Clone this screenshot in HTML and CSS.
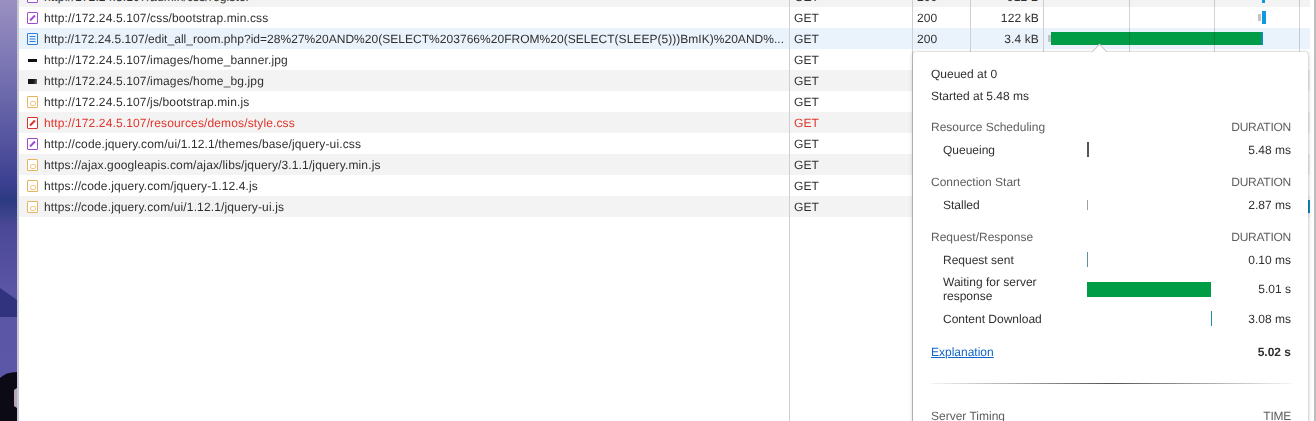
FILE: index.html
```html
<!DOCTYPE html>
<html lang="en">
<head>
  <meta charset="UTF-8">
  <meta name="viewport" content="width=device-width, initial-scale=1.0">
  <title>Network</title>
  <link rel="stylesheet" href="styles.css">
</head>
<body>
  <div class="page">
    <div class="desktop">
      <svg class="desktop-art" width="17" height="421" viewBox="0 0 17 421">
        <path d="M0 288 L17 300 L17 317 L0 317 Z" fill="#32337f"/>
        <path d="M0 378 Q6 372 17 372 L17 421 L0 421 Z" fill="#0c0a14"/>
        <path d="M14 390 L17 388 L17 408 L14 406 Z" fill="#b9a6b4"/>
      </svg>
    </div>

    <div class="panel">
      <div class="table">
        <div class="row row-grey">
          <div class="cell name"><span class="icon icon-css"></span>http://172.24.5.107/admin/css/register</div>
          <div class="cell">GET</div>
          <div class="cell">200</div>
          <div class="cell size">912 B</div>
          <div class="cell fall"><i class="bar bar-blue bar-top"></i></div>
        </div>
        <div class="row">
          <div class="cell name"><span class="icon icon-css"></span>http://172.24.5.107/css/bootstrap.min.css</div>
          <div class="cell">GET</div>
          <div class="cell">200</div>
          <div class="cell size">122 kB</div>
          <div class="cell fall"><i class="bar bar-wait bar-boot-wait"></i><i class="bar bar-blue bar-boot"></i></div>
        </div>
        <div class="row row-selected">
          <div class="cell name name-long"><span class="icon icon-doc"><svg width="11" height="12" viewBox="0 0 11 12"><path d="M2.500 3.500h6M2.500 6h6M2.500 8.500h6" stroke="#2f7fd6" fill="none"/></svg></span>http://172.24.5.107/edit_all_room.php?id=28%27%20AND%20(SELECT%203766%20FROM%20(SELECT(SLEEP(5)))BmIK)%20AND%...</div>
          <div class="cell">GET</div>
          <div class="cell">200</div>
          <div class="cell size">3.4 kB</div>
          <div class="cell fall"><i class="bar bar-wait bar-page-wait"></i><i class="bar bar-green bar-page"></i><i class="bar bar-teal bar-page-end"></i></div>
        </div>
        <div class="row">
          <div class="cell name"><span class="thumb thumb-banner"></span>http://172.24.5.107/images/home_banner.jpg</div>
          <div class="cell">GET</div>
          <div class="cell"></div>
          <div class="cell size"></div>
          <div class="cell fall"></div>
        </div>
        <div class="row row-grey">
          <div class="cell name"><span class="thumb thumb-bg"></span>http://172.24.5.107/images/home_bg.jpg</div>
          <div class="cell">GET</div>
          <div class="cell"></div>
          <div class="cell size"></div>
          <div class="cell fall"></div>
        </div>
        <div class="row">
          <div class="cell name"><span class="icon icon-js"></span>http://172.24.5.107/js/bootstrap.min.js</div>
          <div class="cell">GET</div>
          <div class="cell"></div>
          <div class="cell size"></div>
          <div class="cell fall"></div>
        </div>
        <div class="row row-grey row-failed">
          <div class="cell name"><span class="icon icon-failed"></span>http://172.24.5.107/resources/demos/style.css</div>
          <div class="cell">GET</div>
          <div class="cell"></div>
          <div class="cell size"></div>
          <div class="cell fall"></div>
        </div>
        <div class="row">
          <div class="cell name"><span class="icon icon-css"></span>http://code.jquery.com/ui/1.12.1/themes/base/jquery-ui.css</div>
          <div class="cell">GET</div>
          <div class="cell"></div>
          <div class="cell size"></div>
          <div class="cell fall"></div>
        </div>
        <div class="row row-grey">
          <div class="cell name"><span class="icon icon-js"></span>https://ajax.googleapis.com/ajax/libs/jquery/3.1.1/jquery.min.js</div>
          <div class="cell">GET</div>
          <div class="cell"></div>
          <div class="cell size"></div>
          <div class="cell fall"></div>
        </div>
        <div class="row">
          <div class="cell name"><span class="icon icon-js"></span>https://code.jquery.com/jquery-1.12.4.js</div>
          <div class="cell">GET</div>
          <div class="cell"></div>
          <div class="cell size"></div>
          <div class="cell fall"></div>
        </div>
        <div class="row row-grey">
          <div class="cell name"><span class="icon icon-js"></span>https://code.jquery.com/ui/1.12.1/jquery-ui.js</div>
          <div class="cell">GET</div>
          <div class="cell"></div>
          <div class="cell size"></div>
          <div class="cell fall"><i class="bar bar-teal bar-last"></i></div>
        </div>
        <div class="row row-rest">
          <div class="cell name"></div>
          <div class="cell"></div>
          <div class="cell"></div>
          <div class="cell size"></div>
          <div class="cell fall"></div>
        </div>
      </div>
      <div class="panel-edge"></div>

      <div class="popover">
        <span class="arrow"></span>
        <p class="queued">Queued at 0</p>
        <p class="started">Started at 5.48 ms</p>

        <div class="head head-first"><span>Resource Scheduling</span><span>DURATION</span></div>
        <div class="timing"><span class="timing-name">Queueing</span><span class="track"><i class="tick tick-queue"></i></span><span class="timing-value">5.48 ms</span></div>

        <div class="head"><span>Connection Start</span><span>DURATION</span></div>
        <div class="timing"><span class="timing-name">Stalled</span><span class="track"><i class="tick tick-stalled"></i></span><span class="timing-value">2.87 ms</span></div>

        <div class="head"><span>Request/Response</span><span>DURATION</span></div>
        <div class="timing"><span class="timing-name">Request sent</span><span class="track"><i class="tick tick-sent"></i></span><span class="timing-value">0.10 ms</span></div>
        <div class="timing timing-tall"><span class="timing-name">Waiting for server response</span><span class="track"><i class="tick tick-wait"></i></span><span class="timing-value">5.01 s</span></div>
        <div class="timing"><span class="timing-name">Content Download</span><span class="track"><i class="tick tick-down"></i></span><span class="timing-value">3.08 ms</span></div>

        <div class="total"><a href="#">Explanation</a><strong>5.02 s</strong></div>
        <div class="rule"></div>
        <div class="head head-server"><span>Server Timing</span><span>TIME</span></div>
      </div>
    </div>
  </div>
</body>
</html>
```

FILE: styles.css
```css
* {
  box-sizing: border-box;
}

html, body {
  margin: 0;
  height: 100%;
  overflow: hidden;
}

body {
  font-family: "Liberation Sans", Arial, sans-serif;
  font-size: 12px;
  color: #303030;
  background-color: #ffffff;
  text-rendering: geometricPrecision;
}

/* the screenshot is a little soft */
.page {
  display: flex;
  height: 421px;
  filter: blur(0.3px);
}

/* bit of desktop wallpaper left of the window */
.desktop {
  flex: 0 0 17px;
  background: linear-gradient(#9a90c0 0, #7d78b5 60px, #4f4f9c 150px, #3a3f8f 185px, #2b3a80 200px, #4a4896 225px, #5a55a5 290px, #5f58a8 421px);
}

.desktop-art {
  display: block;
}

.panel {
  flex: 1;
  display: flex;
  position: relative;
  min-width: 0;
  border-left: 2px solid #c9c9d6;
}

.table {
  flex: 1;
  display: flex;
  flex-direction: column;
  margin-top: -14px;
  min-width: 0;
}

.row {
  display: grid;
  grid-template-columns: 771px 123px 58px 73px 1fr;
  height: 21px;
  line-height: 21px;
  letter-spacing: 0.135px;
  flex: none;
}

.row-grey {
  background-color: #f3f3f3;
}

.row-selected {
  background-color: #eaf2fb;
}

.row-failed {
  color: #e0352b;
}

.row-rest {
  flex: 1;
}

.cell {
  padding: 1px 4px 0;
  border-right: 1px solid #cfcfcf;
  white-space: nowrap;
  overflow: hidden;
}

.name {
  display: flex;
  align-items: center;
  padding-left: 8px;
  padding-right: 0;
}

.name-long {
  letter-spacing: 0.03px;
}

.size {
  text-align: right;
  padding-right: 4px;
}

/* waterfall, grid lines every 85px drawn over the bars */
.fall {
  position: relative;
  border-right: none;
  padding: 0;
}

.fall::after {
  content: "";
  position: absolute;
  top: 0;
  right: 0;
  bottom: 0;
  left: 0;
  background-image: linear-gradient(to right, transparent 85px, rgba(0, 0, 0, 0.17) 85px, rgba(0, 0, 0, 0.17) 86px, transparent 86px),
    linear-gradient(to right, transparent 170px, rgba(0, 0, 0, 0.17) 170px, rgba(0, 0, 0, 0.17) 171px, transparent 171px),
    linear-gradient(to right, transparent 255px, rgba(0, 0, 0, 0.17) 255px, rgba(0, 0, 0, 0.17) 256px, transparent 256px);
}

.bar {
  position: absolute;
  top: 4px;
  height: 13px;
}

.bar-blue {
  background-color: #0f9ae0;
}

.bar-wait {
  background-color: #c4c4c4;
  top: 7px;
  height: 7px;
}

.bar-green {
  background-color: #009c46;
}

.bar-teal {
  background-color: #1488b8;
}

.bar-top {
  left: 218px;
  width: 3px;
}

.bar-boot-wait {
  left: 214px;
  width: 3px;
}

.bar-boot {
  left: 218px;
  width: 4px;
}

.bar-page-wait {
  left: 4px;
  width: 3px;
}

.bar-page {
  left: 7px;
  width: 210px;
}

.bar-page-end {
  left: 217px;
  width: 2px;
}

.bar-last {
  left: 264px;
  width: 2px;
}

.panel-edge {
  flex: 0 0 6px;
  background-color: #ffffff;
  border-right: 2px solid #bdbdbd;
}

/* file type icons */
.icon, .thumb {
  flex: none;
  display: inline-flex;
  align-items: center;
  justify-content: center;
  width: 11px;
  height: 12px;
  margin-right: 6px;
}

.icon {
  border: 1px solid #999;
  border-radius: 1px;
  background-color: #ffffff;
}

.icon-css {
  border-color: #9b4fd0;
}

.icon-css::after, .icon-failed::after {
  content: "";
  width: 7px;
  height: 2px;
  background-color: #9b4fd0;
  transform: rotate(-45deg);
}

.icon-failed {
  border-color: #d8352b;
}

.icon-failed::after {
  background-color: #d8352b;
}

.icon-doc {
  border-color: #2f7fd6;
  background-color: #eaf2fb;
}

.icon-doc svg {
  flex: none;
  margin: -1px;
}

.icon-js {
  border-color: #e8b45e;
}

.icon-js::after {
  content: "";
  width: 4px;
  height: 3px;
  margin-top: 2px;
  border: 1px solid #efc98c;
  border-radius: 2px;
}

.thumb-banner::after {
  content: "";
  width: 9px;
  height: 3px;
  background-color: #111;
}

.thumb-bg::after {
  content: "";
  width: 9px;
  height: 5px;
  background: linear-gradient(100deg, #161616 60%, #6a6a78 100%);
}

/* timing popover */
.popover {
  position: absolute;
  top: 52px;
  left: 894px;
  width: 395px;
  height: 380px;
  padding: 15px 17px 0 18px;
  background-color: #ffffff;
  border-radius: 2px;
  box-shadow: 0 0 1px rgba(0, 0, 0, 0.5), 0 1px 4px rgba(0, 0, 0, 0.25);
}

.arrow {
  position: absolute;
  top: -6px;
  left: 181px;
  width: 11px;
  height: 11px;
  background-color: #ffffff;
  border-top: 1px solid #c8c8c8;
  border-left: 1px solid #c8c8c8;
  transform: rotate(45deg);
}

.popover p {
  margin: 0;
  line-height: 14px;
}

.started {
  padding-top: 8px;
}

.head {
  display: flex;
  justify-content: space-between;
  margin-top: 18px;
  height: 14px;
  line-height: 14px;
  color: #5e5e5e;
}

.head span:last-child {
  letter-spacing: -0.25px;
}

.head-first {
  margin-top: 17px;
}

.timing {
  display: grid;
  grid-template-columns: 144px 124px 1fr;
  align-items: center;
  margin-top: 7px;
  min-height: 14px;
  line-height: 14px;
  padding-left: 12px;
}

.head + .timing {
  margin-top: 8px;
}

.timing-name {
  padding-right: 10px;
  line-height: 14px;
}

.timing-tall {
  margin-top: 8px;
}

.timing-tall + .timing {
  margin-top: 8px;
}

.timing-value {
  text-align: right;
}

.track {
  position: relative;
  display: block;
  height: 15px;
}

.tick {
  position: absolute;
  top: 0;
  bottom: 0;
  width: 1px;
  background-color: #7f8a90;
}

.tick-queue {
  left: 0;
  width: 2px;
  background-color: #555;
}

.tick-stalled {
  left: 0;
  top: 3px;
  bottom: 2px;
  background-color: #a0a0a0;
}

.tick-sent {
  left: 0;
  background-color: #5f8fa0;
}

.tick-wait {
  left: 0;
  width: 124px;
  background-color: #009c46;
}

.tick-down {
  left: 124px;
  background-color: #1d8fa8;
}

.total {
  display: flex;
  justify-content: space-between;
  margin-top: 19px;
  line-height: 14px;
}

.total a {
  color: #1264c8;
}

.rule {
  height: 1px;
  margin-top: 24px;
  background: linear-gradient(to right, #f4f4f4, #555 50%, #f4f4f4);
}

.head-server {
  margin-top: 25px;
}
```
